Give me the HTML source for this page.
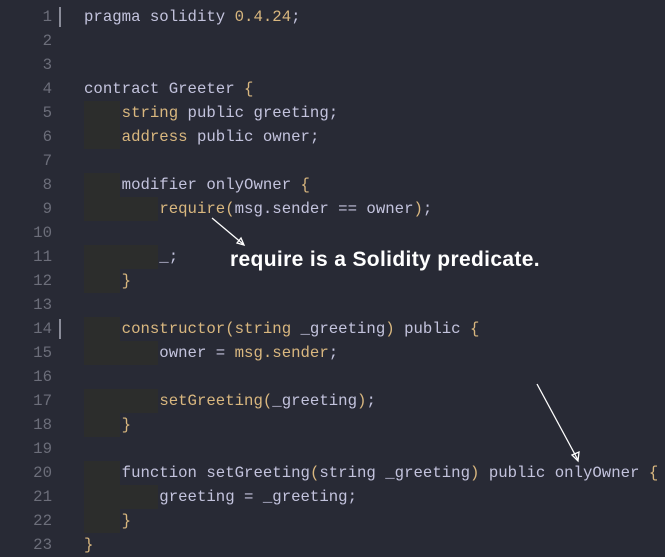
<!DOCTYPE html><html><head><style>
body{margin:0;width:665px;height:556px;background:#282a35;overflow:hidden;position:relative;font-family:"Liberation Mono",monospace;font-size:15.7px}
.l{position:absolute;left:0;height:24px;line-height:24px;white-space:pre;color:#c3c3dd}
.n{position:absolute;width:52px;text-align:right;color:#6c6e7a;left:0}
.c{position:absolute;left:84px}
.t{color:#d9b77f}
.g{position:absolute;background:#2c2d2c;height:24px}
.m{position:absolute;left:59px;width:2px;height:20px;background:#8a8c99}
.ann{position:absolute;left:230px;top:248px;color:#fff;font:bold 21px "Liberation Sans",sans-serif;letter-spacing:0.35px}
</style></head><body>
<div class="g" style="left:84px;top:101px;width:36px;height:48px"></div>
<div class="g" style="left:84px;top:173px;width:36px;height:48px"></div>
<div class="g" style="left:120px;top:197px;width:38px;height:24px"></div>
<div class="g" style="left:84px;top:245px;width:36px;height:48px"></div>
<div class="g" style="left:120px;top:245px;width:38px;height:24px"></div>
<div class="g" style="left:84px;top:317px;width:36px;height:48px"></div>
<div class="g" style="left:120px;top:341px;width:38px;height:24px"></div>
<div class="g" style="left:84px;top:389px;width:36px;height:48px"></div>
<div class="g" style="left:120px;top:389px;width:38px;height:24px"></div>
<div class="g" style="left:84px;top:461px;width:36px;height:72px"></div>
<div class="g" style="left:120px;top:485px;width:38px;height:24px"></div>
<div class="m" style="top:7px"></div><div class="m" style="top:319px"></div>
<div class="l" style="top:5px"><span class="n">1</span><span class="c">pragma solidity <span class="t">0.4.24</span>;</span></div>
<div class="l" style="top:29px"><span class="n">2</span></div>
<div class="l" style="top:53px"><span class="n">3</span></div>
<div class="l" style="top:77px"><span class="n">4</span><span class="c">contract Greeter <span class="t">{</span></span></div>
<div class="l" style="top:101px"><span class="n">5</span><span class="c">    <span class="t">string</span> public greeting;</span></div>
<div class="l" style="top:125px"><span class="n">6</span><span class="c">    <span class="t">address</span> public owner;</span></div>
<div class="l" style="top:149px"><span class="n">7</span></div>
<div class="l" style="top:173px"><span class="n">8</span><span class="c">    modifier onlyOwner <span class="t">{</span></span></div>
<div class="l" style="top:197px"><span class="n">9</span><span class="c">        <span class="t">require(</span>msg.sender == owner<span class="t">)</span>;</span></div>
<div class="l" style="top:221px"><span class="n">10</span></div>
<div class="l" style="top:245px"><span class="n">11</span><span class="c">        _;</span></div>
<div class="l" style="top:269px"><span class="n">12</span><span class="c">    <span class="t">}</span></span></div>
<div class="l" style="top:293px"><span class="n">13</span></div>
<div class="l" style="top:317px"><span class="n">14</span><span class="c">    <span class="t">constructor(string</span> _greeting<span class="t">)</span> public <span class="t">{</span></span></div>
<div class="l" style="top:341px"><span class="n">15</span><span class="c">        owner = <span class="t">msg.sender</span>;</span></div>
<div class="l" style="top:365px"><span class="n">16</span></div>
<div class="l" style="top:389px"><span class="n">17</span><span class="c">        <span class="t">setGreeting(</span>_greeting<span class="t">)</span>;</span></div>
<div class="l" style="top:413px"><span class="n">18</span><span class="c">    <span class="t">}</span></span></div>
<div class="l" style="top:437px"><span class="n">19</span></div>
<div class="l" style="top:461px"><span class="n">20</span><span class="c">    function setGreeting<span class="t">(</span>string _greeting<span class="t">)</span> public onlyOwner <span class="t">{</span></span></div>
<div class="l" style="top:485px"><span class="n">21</span><span class="c">        greeting = _greeting;</span></div>
<div class="l" style="top:509px"><span class="n">22</span><span class="c">    <span class="t">}</span></span></div>
<div class="l" style="top:533px"><span class="n">23</span><span class="c"><span class="t">}</span></span></div>
<div class="ann">require is a Solidity predicate.</div>
<svg width="665" height="556" style="position:absolute;left:0;top:0" fill="none" stroke="#fff" stroke-width="1.3">
<path d="M212 218L243 244"/><path d="M237 243L244 245L241 238Z"/>
<path d="M537 384L578 460"/><path d="M572 455L578 461L579 452Z"/>
</svg>
</body></html>
